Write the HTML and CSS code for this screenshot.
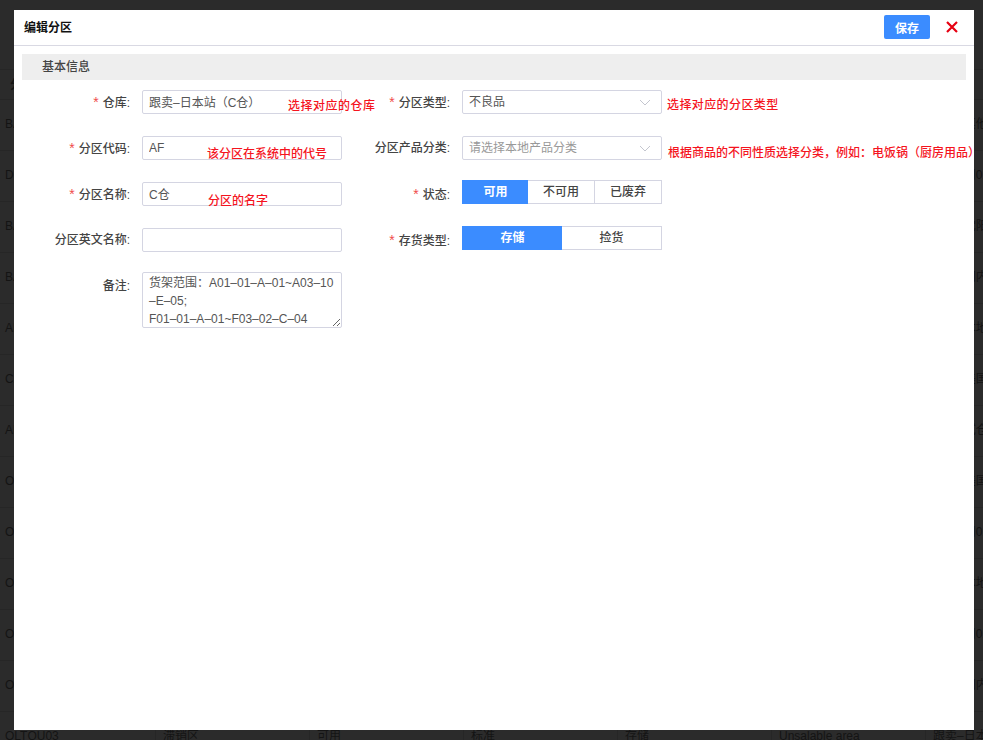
FILE: index.html
```html
<!DOCTYPE html>
<html lang="zh-CN">
<head>
<meta charset="utf-8">
<title>编辑分区</title>
<link rel="stylesheet" href="styles.css">
</head>
<body>
<div class="backdrop">
  <div class="bg-head"><span class="bg-h1">分区代码</span></div>
  <div class="bg-row"><span>BAD01</span><span>不良品区</span><span>可用</span><span>标准</span><span>存储</span><span>Bad area</span><span>跟卖–其他</span></div>
  <div class="bg-row"><span>DEF01</span><span>不良品区</span><span>可用</span><span>标准</span><span>存储</span><span>Bad area</span><span>跟卖–州01</span></div>
  <div class="bg-row"><span>BAD02</span><span>不良品区</span><span>可用</span><span>标准</span><span>存储</span><span>Bad area</span><span>跟卖–沈阳</span></div>
  <div class="bg-row"><span>BAD03</span><span>不良品区</span><span>可用</span><span>标准</span><span>存储</span><span>Bad area</span><span>跟卖–国内</span></div>
  <div class="bg-row"><span>AF01</span><span>滞销区</span><span>可用</span><span>标准</span><span>存储</span><span>Unsalable area</span><span>跟卖–本地</span></div>
  <div class="bg-row"><span>CA01</span><span>滞销区</span><span>可用</span><span>标准</span><span>存储</span><span>Unsalable area</span><span>跟卖–美国</span></div>
  <div class="bg-row"><span>AF02</span><span>滞销区</span><span>可用</span><span>标准</span><span>存储</span><span>Unsalable area</span><span>跟卖–试仓</span></div>
  <div class="bg-row"><span>OLTQU01</span><span>滞销区</span><span>可用</span><span>标准</span><span>存储</span><span>Unsalable area</span><span>跟卖–美国</span></div>
  <div class="bg-row"><span>OLTQU02</span><span>滞销区</span><span>可用</span><span>标准</span><span>存储</span><span>Unsalable area</span><span>跟卖–州01</span></div>
  <div class="bg-row"><span>OLTQU04</span><span>滞销区</span><span>可用</span><span>标准</span><span>存储</span><span>Unsalable area</span><span>跟卖–本地</span></div>
  <div class="bg-row"><span>OLTQU05</span><span>滞销区</span><span>可用</span><span>标准</span><span>存储</span><span>Unsalable area</span><span>跟卖–州01</span></div>
  <div class="bg-row"><span>OLTQU06</span><span>滞销区</span><span>可用</span><span>标准</span><span>存储</span><span>Unsalable area</span><span>跟卖–国内</span></div>
  <div class="bg-row"><span>OLTQU03</span><span>滞销区</span><span>可用</span><span>标准</span><span>存储</span><span>Unsalable area</span><span>跟卖–日本站</span></div>
</div>

<div class="modal">
  <header class="modal-head">
    <h1 class="modal-title">编辑分区</h1>
    <button class="btn-save" type="button">保存</button>
    <button class="btn-close" type="button" aria-label="关闭">
      <svg width="12" height="12" viewBox="0 0 12 12"><path d="M1 1l10 10M11 1L1 11" stroke="#e60012" stroke-width="2.2" fill="none"/></svg>
    </button>
  </header>
  <div class="section-bar">基本信息</div>
  <form class="form">
    <div class="row">
      <div class="field"><label class="label"><i>*</i>仓库:</label><input class="ctl" value="跟卖–日本站（C仓）"></div>
      <div class="field"><label class="label"><i>*</i>分区类型:</label>
        <div class="ctl select">不良品<svg class="chev" width="12" height="7" viewBox="0 0 12 7"><path d="M1 1l5 5 5-5" stroke="#c4c6cf" fill="none"/></svg></div></div>
    </div>
    <div class="row">
      <div class="field"><label class="label"><i>*</i>分区代码:</label><input class="ctl" value="AF"></div>
      <div class="field"><label class="label">分区产品分类:</label>
        <div class="ctl select placeholder">请选择本地产品分类<svg class="chev" width="12" height="7" viewBox="0 0 12 7"><path d="M1 1l5 5 5-5" stroke="#c4c6cf" fill="none"/></svg></div></div>
    </div>
    <div class="row">
      <div class="field"><label class="label"><i>*</i>分区名称:</label><input class="ctl" value="C仓"></div>
      <div class="field seg-field"><label class="label"><i>*</i>状态:</label>
        <div class="seg seg-three"><span class="on">可用</span><span>不可用</span><span>已废弃</span></div></div>
    </div>
    <div class="row row-short">
      <div class="field"><label class="label">分区英文名称:</label><input class="ctl" value=""></div>
      <div class="field seg-field"><label class="label"><i>*</i>存货类型:</label>
        <div class="seg"><span class="on">存储</span><span>捡货</span></div></div>
    </div>
    <div class="row">
      <div class="field"><label class="label label-area">备注:</label><textarea class="ctl area">货架范围：A01–01–A–01~A03–10
–E–05;
F01–01–A–01~F03–02–C–04</textarea></div>
    </div>
  </form>
  <span class="note n1">选择对应的仓库</span>
  <span class="note n2">选择对应的分区类型</span>
  <span class="note n3">该分区在系统中的代号</span>
  <span class="note n4">根据商品的不同性质选择分类，例如：电饭锅（厨房用品）</span>
  <span class="note n5">分区的名字</span>
</div>
</body>
</html>
```
FILE: styles.css
```css
* { box-sizing: border-box; }
html, body { margin: 0; height: 100%; }
body {
  position: relative;
  height: 740px;
  overflow: hidden;
  background: #2b2b2b;
  font: 12px/18px "Liberation Sans", "Noto Sans CJK SC", sans-serif;
}
.backdrop { padding-top: 69px; color: #141414; width: 1100px; }
.bg-head { height: 31px; border-top: 1px solid #262626; border-bottom: 1px solid #262626; line-height: 30px; }
.bg-h1 { margin-left: 10px; font-weight: 700; }
.bg-row {
  display: grid;
  grid-template-columns: 155px repeat(6, 154px);
  height: 51px;
  border-bottom: 1px solid #262626;
  line-height: 49px;
}
.bg-row span { padding-left: 7px; border-left: 1px solid #262626; white-space: nowrap; }
.bg-row span:first-child { padding-left: 5px; border-left: 0; }

.modal {
  position: absolute;
  left: 14px;
  top: 10px;
  width: 960px;
  height: 720px;
  background: #fff;
}
.modal-head {
  display: flex;
  align-items: center;
  height: 36px;
  padding: 0 16px 1px 10px;
  border-bottom: 1px solid #d9d9e3;
}
.modal-title { flex: 1; margin: 2px 0 0; font-size: 12px; font-weight: 700; color: #111; }
.btn-save {
  width: 46px;
  height: 24px;
  padding: 0;
  border: 0;
  border-radius: 2px;
  background: #3b8cff;
  color: #fff;
  font: 700 12px "Liberation Sans", "Noto Sans CJK SC", sans-serif;
}
.btn-close { display: flex; width: 12px; height: 12px; margin-left: 16px; padding: 0; border: 0; background: none; }
.section-bar {
  height: 26px;
  margin: 8px 8px 10px;
  padding-left: 20px;
  background: #eee;
  color: #444;
  font-weight: 500;
  line-height: 27px;
}
.form { padding-left: 8px; }
.row { display: flex; height: 46px; }
.row-short { height: 44px; }
.field { display: flex; width: 320px; align-items: flex-start; }
.label {
  width: 108px;
  margin-right: 12px;
  color: #444;
  font-weight: 500;
  line-height: 25px;
  text-align: right;
  white-space: nowrap;
}
.label i { margin-right: 4px; color: #f04b4b; font-size: 14px; font-style: normal; font-weight: 400; }
.label-area { margin-top: 2px; }
.ctl {
  width: 200px;
  height: 24px;
  padding: 0 6px;
  border: 1px solid #d4d5e2;
  border-radius: 2px;
  background: #fff;
  color: #555;
  font: 12px/22px "Liberation Sans", "Noto Sans CJK SC", sans-serif;
  outline: none;
}
input.ctl { padding-bottom: 1px; }
.select { display: flex; align-items: center; justify-content: space-between; padding-right: 10px; }
.placeholder { color: #999; }
.chev { flex: none; }
.area { display: block; height: 56px; padding: 1px 6px 0; line-height: 18px; resize: vertical; overflow: hidden; white-space: pre; }
.seg-field { margin-top: -2px; }
.seg-field .label { margin-top: 2px; }
.seg { display: flex; width: 200px; height: 24px; border: 1px solid #d4d5e2; border-left: 0; background: #fff; }
.seg span {
  flex: 1;
  margin-top: -1px;
  margin-bottom: -1px;
  border-left: 1px solid #d4d5e2;
  color: #444;
  font-weight: 500;
  line-height: 24px;
  text-align: center;
}
.seg .on { background: #3b8cff; border-color: #3b8cff; color: #fff; font-weight: 700; }
.seg .on + span { border-left: 0; }
.seg-three span:first-child { flex: 0 0 66px; }
.note { position: absolute; color: #f5141e; font-size: 12px; font-weight: 500; line-height: 16px; white-space: nowrap; }
.n1 { left: 274px; top: 88px; letter-spacing: .5px; }
.n2 { left: 653px; top: 87px; letter-spacing: .4px; }
.n3 { left: 193px; top: 136px; }
.n4 { left: 654px; top: 135px; }
.n5 { left: 194px; top: 183px; }
```
